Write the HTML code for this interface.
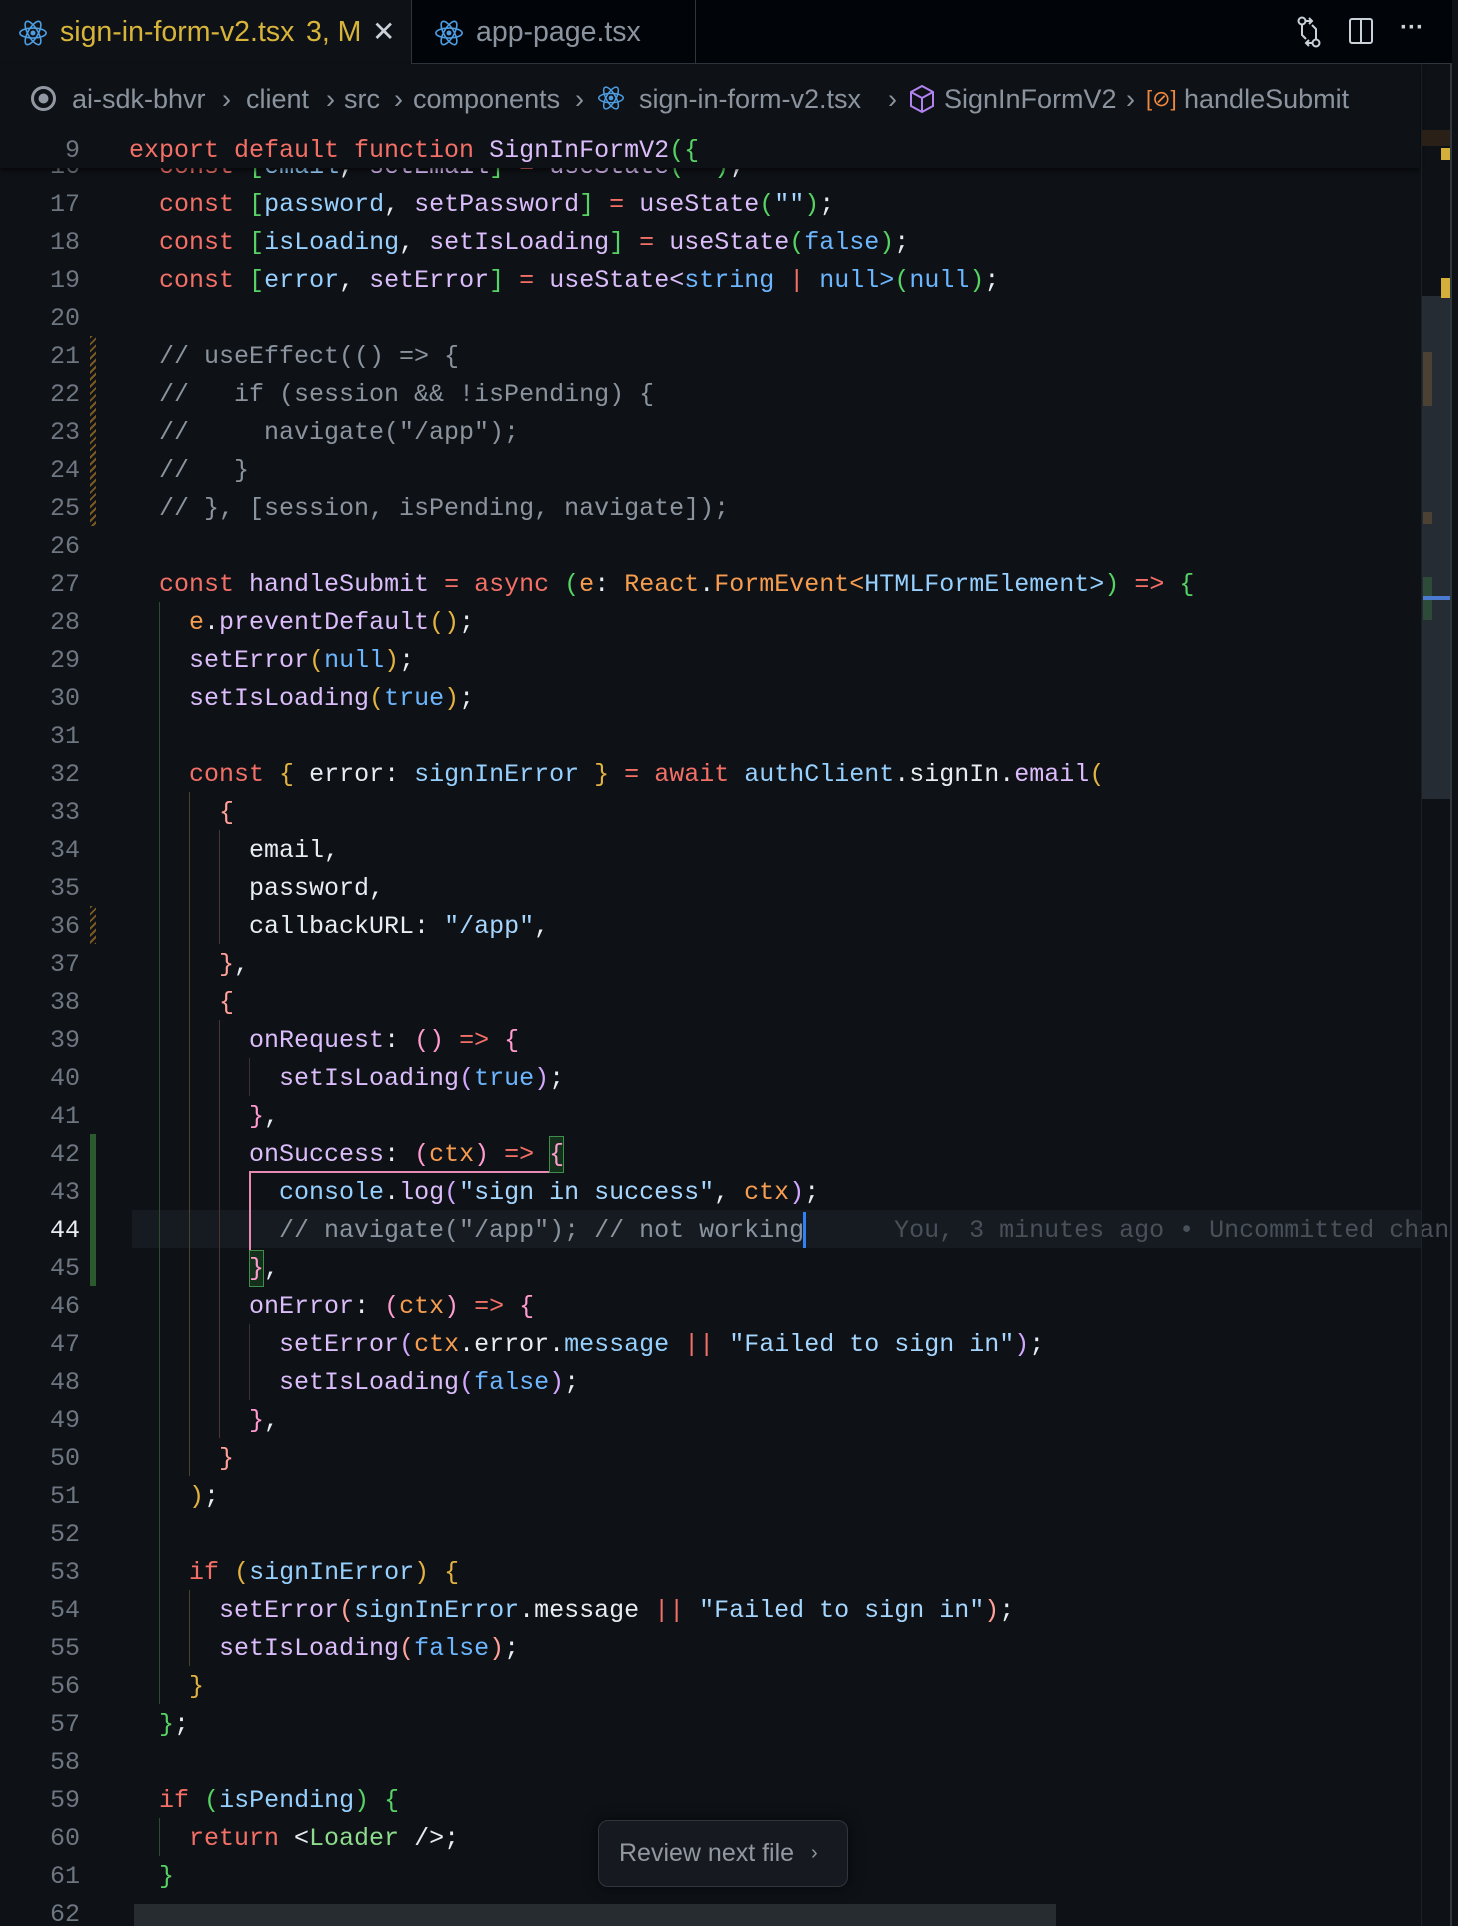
<!DOCTYPE html>
<html><head><meta charset="utf-8">
<style>
*{margin:0;padding:0;box-sizing:border-box}
html,body{width:1458px;height:1926px;overflow:hidden;background:#0e1116}
body{position:relative;font-family:"Liberation Mono",monospace}
.tabbar{position:absolute;left:0;top:0;width:1458px;height:64px;background:#010409;border-bottom:1px solid #30363d}
.tab{position:absolute;top:0;height:64px;font-family:"Liberation Sans",sans-serif;font-size:28.5px;line-height:64px;white-space:nowrap}
.crumb{position:absolute;top:80px;height:38px;line-height:38px;font-family:"Liberation Sans",sans-serif;font-size:27px;color:#8b949e;white-space:nowrap}
.ln{position:absolute;left:0;width:80px;text-align:right;height:38px;line-height:38px;font-size:25px;color:#6e7681;margin-top:2px}
.cl{position:absolute;left:129px;height:38px;line-height:38px;font-size:25px;white-space:pre;color:#e6edf3;margin-top:2px}
.g{position:absolute;width:1px}
.k{color:#f47067}.f{color:#dcbdfb}.v{color:#96d0ff}.c{color:#8b949e}.s{color:#a5d6ff}.o{color:#f69d50}.n{color:#6cb6ff}.w{color:#e6edf3}
.b1{color:#56d364}.b2{color:#e3b341}.b3{color:#ffa198}.b4{color:#ff9bce}.b5{color:#d2a8ff}.t{color:#8ddb8c}
</style></head><body>

<div class="tabbar"></div>
<div class="tab" style="left:0;width:412px;height:65px;background:#0e1116;border-right:1px solid #30363d;">
  <svg style="position:absolute;left:18px;top:18px" width="30" height="30" viewBox="-12 -12 24 24"><g fill="none" stroke="#4d9de0" stroke-width="1.3"><ellipse rx="10.5" ry="4"/><ellipse rx="10.5" ry="4" transform="rotate(60)"/><ellipse rx="10.5" ry="4" transform="rotate(120)"/></g><circle r="2" fill="#4d9de0"/></svg>
  <span style="position:absolute;left:60px;color:#d7b43a">sign-in-form-v2.tsx</span>
  <span style="position:absolute;left:306px;color:#d7b43a">3, M</span>
  <span style="position:absolute;left:372px;color:#c9d1d9;font-size:28px">✕</span>
</div>
<div class="tab" style="left:412px;width:284px;border-right:1px solid #30363d;">
  <svg style="position:absolute;left:22px;top:18px" width="30" height="30" viewBox="-12 -12 24 24"><g fill="none" stroke="#4d9de0" stroke-width="1.3"><ellipse rx="10.5" ry="4"/><ellipse rx="10.5" ry="4" transform="rotate(60)"/><ellipse rx="10.5" ry="4" transform="rotate(120)"/></g><circle r="2" fill="#4d9de0"/></svg>
  <span style="position:absolute;left:64px;color:#8b949e">app-page.tsx</span>
</div>
<svg style="position:absolute;left:1294px;top:15px" width="30" height="34" viewBox="0 0 30 34" fill="none" stroke="#c9d1d9" stroke-width="2"><circle cx="8" cy="6" r="3.5"/><circle cx="22" cy="28" r="3.5"/><path d="M8 10v10l4 4M22 24V14l-4-4M12 6h6M18 28h-6"/><path d="M15 3l3 3-3 3M15 25l-3 3 3 3"/></svg>
<svg style="position:absolute;left:1348px;top:17px" width="26" height="28" viewBox="0 0 26 28" fill="none" stroke="#c9d1d9" stroke-width="2"><rect x="2" y="2" width="22" height="24" rx="2"/><path d="M13 2v24"/></svg>
<div style="position:absolute;left:1400px;top:14px;color:#c9d1d9;font-family:'Liberation Sans',sans-serif;font-size:24px;font-weight:bold">···</div>

<div style="position:absolute;left:132px;top:1210px;width:1290px;height:38px;background:#161b22"></div>

<div style="position:absolute;left:90px;top:336px;width:6px;height:190px;background:repeating-linear-gradient(135deg,#7a5a22 0 2px,transparent 2px 5px)"></div>
<div style="position:absolute;left:90px;top:906px;width:6px;height:38px;background:repeating-linear-gradient(135deg,#7a5a22 0 2px,transparent 2px 5px)"></div>
<div style="position:absolute;left:90px;top:1134px;width:6px;height:152px;background:#2b5a2e"></div>

<div class="g" style="left:159px;top:602px;height:1102px;background:#2e4a30"></div>
<div class="g" style="left:189px;top:792px;height:684px;background:#4d4228"></div>
<div class="g" style="left:219px;top:830px;height:114px;background:#4a3530"></div>
<div class="g" style="left:219px;top:1020px;height:418px;background:#4a3530"></div>
<div class="g" style="left:249px;top:1058px;height:38px;background:#3d2e3a"></div>
<div class="g" style="left:249px;top:1324px;height:76px;background:#3d2e3a"></div>
<div class="g" style="left:189px;top:1590px;height:76px;background:#4d4228"></div>
<div class="g" style="left:159px;top:1818px;height:38px;background:#2e4a30"></div>

<div style="position:absolute;left:249px;top:1171px;width:300px;height:2px;background:#e88ab4"></div>
<div style="position:absolute;left:249px;top:1171px;width:2px;height:80px;background:#e88ab4"></div>
<div style="position:absolute;left:549px;top:1136px;width:15px;height:37px;border:1.5px solid #3f8f4a;background:#14301c"></div>
<div style="position:absolute;left:249px;top:1250px;width:15px;height:37px;border:1.5px solid #3f8f4a;background:#14301c"></div>

<div class="cl" style="top:146px"><span class="k">  const</span> <span class="b1">[</span><span class="v">email</span>, <span class="f">setEmail</span><span class="b1">]</span> <span class="k">=</span> <span class="f">useState</span><span class="b1">(</span><span class="s">""</span><span class="b1">)</span>;</div>
<div class="ln" style="top:146px">16</div>

<div style="position:absolute;left:0;top:64px;width:1420px;height:104px;background:#0e1116;box-shadow:0 3px 4px rgba(0,0,0,0.5)"></div>
<svg style="position:absolute;left:30px;top:85px" width="27" height="27" viewBox="0 0 27 27"><circle cx="13.5" cy="13.5" r="11" fill="none" stroke="#9198a1" stroke-width="3"/><circle cx="13.5" cy="13.5" r="5" fill="#9198a1"/></svg>
<div class="crumb" style="left:72px">ai-sdk-bhvr</div>
<div class="crumb" style="left:222px">›</div>
<div class="crumb" style="left:246px">client</div>
<div class="crumb" style="left:326px">›</div>
<div class="crumb" style="left:344px">src</div>
<div class="crumb" style="left:394px">›</div>
<div class="crumb" style="left:413px">components</div>
<div class="crumb" style="left:575px">›</div>
<svg style="position:absolute;left:597px;top:84px" width="28" height="28" viewBox="-12 -12 24 24"><g fill="none" stroke="#4d9de0" stroke-width="1.3"><ellipse rx="10.5" ry="4"/><ellipse rx="10.5" ry="4" transform="rotate(60)"/><ellipse rx="10.5" ry="4" transform="rotate(120)"/></g><circle r="2" fill="#4d9de0"/></svg>
<div class="crumb" style="left:639px">sign-in-form-v2.tsx</div>
<div class="crumb" style="left:888px">›</div>
<svg style="position:absolute;left:908px;top:84px" width="28" height="30" viewBox="0 0 28 30" fill="none" stroke="#b083f0" stroke-width="2"><path d="M14 2l11 6v14l-11 6-11-6V8z"/><path d="M3 8l11 6 11-6M14 14v14"/></svg>
<div class="crumb" style="left:944px">SignInFormV2</div>
<div class="crumb" style="left:1126px">›</div>
<div class="crumb" style="left:1146px;color:#f0883e;font-size:22px">[⊘]</div>
<div class="crumb" style="left:1184px">handleSubmit</div>
<div class="ln" style="top:130px">9</div>
<div class="cl" style="top:130px"><span class="k">export default function</span> <span class="f">SignInFormV2</span><span class="b1">({</span></div>

<div class="ln" style="top:184px">17</div><div class="cl" style="top:184px">  <span class="k">const</span> <span class="b1">[</span><span class="v">password</span>, <span class="f">setPassword</span><span class="b1">]</span> <span class="k">=</span> <span class="f">useState</span><span class="b1">(</span><span class="s">""</span><span class="b1">)</span>;</div>
<div class="ln" style="top:222px">18</div><div class="cl" style="top:222px">  <span class="k">const</span> <span class="b1">[</span><span class="v">isLoading</span>, <span class="f">setIsLoading</span><span class="b1">]</span> <span class="k">=</span> <span class="f">useState</span><span class="b1">(</span><span class="n">false</span><span class="b1">)</span>;</div>
<div class="ln" style="top:260px">19</div><div class="cl" style="top:260px">  <span class="k">const</span> <span class="b1">[</span><span class="v">error</span>, <span class="f">setError</span><span class="b1">]</span> <span class="k">=</span> <span class="f">useState</span><span class="f">&lt;</span><span class="n">string</span> <span class="k">|</span> <span class="n">null&gt;</span><span class="b1">(</span><span class="n">null</span><span class="b1">)</span>;</div>
<div class="ln" style="top:298px">20</div>
<div class="ln" style="top:336px">21</div><div class="cl c" style="top:336px">  // useEffect(() =&gt; {</div>
<div class="ln" style="top:374px">22</div><div class="cl c" style="top:374px">  //   if (session &amp;&amp; !isPending) {</div>
<div class="ln" style="top:412px">23</div><div class="cl c" style="top:412px">  //     navigate("/app");</div>
<div class="ln" style="top:450px">24</div><div class="cl c" style="top:450px">  //   }</div>
<div class="ln" style="top:488px">25</div><div class="cl c" style="top:488px">  // }, [session, isPending, navigate]);</div>
<div class="ln" style="top:526px">26</div>
<div class="ln" style="top:564px">27</div><div class="cl" style="top:564px">  <span class="k">const</span> <span class="f">handleSubmit</span> <span class="k">=</span> <span class="k">async</span> <span class="b1">(</span><span class="o">e</span>: <span class="o">React</span>.<span class="o">FormEvent&lt;</span><span class="v">HTMLFormElement&gt;</span><span class="b1">)</span> <span class="k">=&gt;</span> <span class="b1">{</span></div>
<div class="ln" style="top:602px">28</div><div class="cl" style="top:602px">    <span class="o">e</span>.<span class="f">preventDefault</span><span class="b2">()</span>;</div>
<div class="ln" style="top:640px">29</div><div class="cl" style="top:640px">    <span class="f">setError</span><span class="b2">(</span><span class="n">null</span><span class="b2">)</span>;</div>
<div class="ln" style="top:678px">30</div><div class="cl" style="top:678px">    <span class="f">setIsLoading</span><span class="b2">(</span><span class="n">true</span><span class="b2">)</span>;</div>
<div class="ln" style="top:716px">31</div>
<div class="ln" style="top:754px">32</div><div class="cl" style="top:754px">    <span class="k">const</span> <span class="b2">{</span> error: <span class="v">signInError</span> <span class="b2">}</span> <span class="k">=</span> <span class="k">await</span> <span class="v">authClient</span>.signIn.<span class="f">email</span><span class="b2">(</span></div>
<div class="ln" style="top:792px">33</div><div class="cl" style="top:792px">      <span class="b3">{</span></div>
<div class="ln" style="top:830px">34</div><div class="cl" style="top:830px">        email,</div>
<div class="ln" style="top:868px">35</div><div class="cl" style="top:868px">        password,</div>
<div class="ln" style="top:906px">36</div><div class="cl" style="top:906px">        callbackURL: <span class="s">"/app"</span>,</div>
<div class="ln" style="top:944px">37</div><div class="cl" style="top:944px">      <span class="b3">}</span>,</div>
<div class="ln" style="top:982px">38</div><div class="cl" style="top:982px">      <span class="b3">{</span></div>
<div class="ln" style="top:1020px">39</div><div class="cl" style="top:1020px">        <span class="f">onRequest</span>: <span class="b4">()</span> <span class="k">=&gt;</span> <span class="b4">{</span></div>
<div class="ln" style="top:1058px">40</div><div class="cl" style="top:1058px">          <span class="f">setIsLoading</span><span class="b5">(</span><span class="n">true</span><span class="b5">)</span>;</div>
<div class="ln" style="top:1096px">41</div><div class="cl" style="top:1096px">        <span class="b4">}</span>,</div>
<div class="ln" style="top:1134px">42</div><div class="cl" style="top:1134px">        <span class="f">onSuccess</span>: <span class="b4">(</span><span class="o">ctx</span><span class="b4">)</span> <span class="k">=&gt;</span> <span class="b4">{</span></div>
<div class="ln" style="top:1172px">43</div><div class="cl" style="top:1172px">          <span class="v">console</span>.<span class="f">log</span><span class="b5">(</span><span class="s">"sign in success"</span>, <span class="o">ctx</span><span class="b5">)</span>;</div>
<div class="ln" style="top:1210px;color:#e6edf3">44</div><div class="cl c" style="top:1210px">          // navigate("/app"); // not working      <span style="color:#4a5059">You, 3 minutes ago • Uncommitted chan</span></div>
<div style="position:absolute;left:803px;top:1212px;width:3px;height:36px;background:#2f81f7"></div>
<div class="ln" style="top:1248px">45</div><div class="cl" style="top:1248px">        <span class="b4">}</span>,</div>
<div class="ln" style="top:1286px">46</div><div class="cl" style="top:1286px">        <span class="f">onError</span>: <span class="b4">(</span><span class="o">ctx</span><span class="b4">)</span> <span class="k">=&gt;</span> <span class="b4">{</span></div>
<div class="ln" style="top:1324px">47</div><div class="cl" style="top:1324px">          <span class="f">setError</span><span class="b5">(</span><span class="o">ctx</span>.error.<span class="v">message</span> <span class="k">||</span> <span class="s">"Failed to sign in"</span><span class="b5">)</span>;</div>
<div class="ln" style="top:1362px">48</div><div class="cl" style="top:1362px">          <span class="f">setIsLoading</span><span class="b5">(</span><span class="n">false</span><span class="b5">)</span>;</div>
<div class="ln" style="top:1400px">49</div><div class="cl" style="top:1400px">        <span class="b4">}</span>,</div>
<div class="ln" style="top:1438px">50</div><div class="cl" style="top:1438px">      <span class="b3">}</span></div>
<div class="ln" style="top:1476px">51</div><div class="cl" style="top:1476px">    <span class="b2">)</span>;</div>
<div class="ln" style="top:1514px">52</div>
<div class="ln" style="top:1552px">53</div><div class="cl" style="top:1552px">    <span class="k">if</span> <span class="b2">(</span><span class="v">signInError</span><span class="b2">)</span> <span class="b2">{</span></div>
<div class="ln" style="top:1590px">54</div><div class="cl" style="top:1590px">      <span class="f">setError</span><span class="b3">(</span><span class="v">signInError</span>.message <span class="k">||</span> <span class="s">"Failed to sign in"</span><span class="b3">)</span>;</div>
<div class="ln" style="top:1628px">55</div><div class="cl" style="top:1628px">      <span class="f">setIsLoading</span><span class="b3">(</span><span class="n">false</span><span class="b3">)</span>;</div>
<div class="ln" style="top:1666px">56</div><div class="cl" style="top:1666px">    <span class="b2">}</span></div>
<div class="ln" style="top:1704px">57</div><div class="cl" style="top:1704px">  <span class="b1">}</span>;</div>
<div class="ln" style="top:1742px">58</div>
<div class="ln" style="top:1780px">59</div><div class="cl" style="top:1780px">  <span class="k">if</span> <span class="b1">(</span><span class="v">isPending</span><span class="b1">)</span> <span class="b1">{</span></div>
<div class="ln" style="top:1818px">60</div><div class="cl" style="top:1818px">    <span class="k">return</span> &lt;<span class="t">Loader</span> /&gt;;</div>
<div class="ln" style="top:1856px">61</div><div class="cl" style="top:1856px">  <span class="b1">}</span></div>
<div class="ln" style="top:1894px">62</div>

<div style="position:absolute;left:1421px;top:64px;width:1px;height:1862px;background:#1c2026"></div>
<div style="position:absolute;left:1422px;top:296px;width:28px;height:503px;background:#262c33"></div>
<div style="position:absolute;left:1422px;top:130px;width:28px;height:16px;background:#2a2018"></div>
<div style="position:absolute;left:1441px;top:148px;width:9px;height:12px;background:#d4b03a"></div>
<div style="position:absolute;left:1441px;top:278px;width:9px;height:20px;background:#d4b03a"></div>
<div style="position:absolute;left:1423px;top:352px;width:9px;height:54px;background:#4b4234"></div>
<div style="position:absolute;left:1423px;top:512px;width:9px;height:12px;background:#4b4234"></div>
<div style="position:absolute;left:1423px;top:577px;width:9px;height:43px;background:#2e4a38"></div>
<div style="position:absolute;left:1423px;top:596px;width:27px;height:4px;background:#4a7bd0"></div>
<div style="position:absolute;left:1450px;top:64px;width:2px;height:1862px;background:#30363d"></div>
<div style="position:absolute;left:1452px;top:0;width:6px;height:1926px;background:#0e1116"></div>

<div style="position:absolute;left:134px;top:1904px;width:922px;height:22px;background:#272c31"></div>

<div style="position:absolute;left:598px;top:1820px;width:250px;height:67px;border:1.5px solid #30363d;border-radius:10px;background:#161a20;box-shadow:0 0 14px rgba(0,0,0,0.6);font-family:'Liberation Sans',sans-serif;font-size:25px;color:#9198a1;line-height:64px;white-space:nowrap">
<span style="position:absolute;left:20px">Review next file</span><span style="position:absolute;left:212px;font-size:20px">›</span></div>

</body></html>
